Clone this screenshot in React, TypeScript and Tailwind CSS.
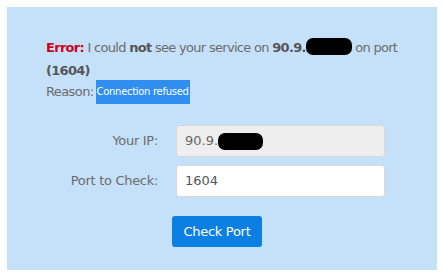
export default function App() {
  return (
    <div className="w-[443px] h-[277px] bg-white p-[7px] pr-[6px] font-['DejaVu_Sans',sans-serif] text-[#6b6b6b]">
      <div className="h-[263px] bg-[#c5e1fa] pl-[39px] pr-[10px] pt-[29px]">
        <p className="text-[13px] leading-[23px] tracking-[-0.7px] whitespace-nowrap">
          <span className="font-bold text-[#d0021b]">Error:</span> I could{' '}
          <span className="font-bold text-[#555]">not</span> see your service on{' '}
          <span className="font-bold text-[#555]">90.9.</span>
          <span className="inline-block w-[46px] h-[17px] bg-black rounded-[7px] align-[-3px]" /> on port
          <br />
          <span className="font-bold text-[#555]">(1604)</span>
        </p>
        <div className="-mt-[2px] flex items-center text-[13px] tracking-[-0.6px]">
          <span>Reason:</span>
          <span className="ml-[2px] bg-[#2f8ef0] text-white text-[10px] leading-[24px] px-[1px] tracking-[-0.3px]">
            Connection refused
          </span>
        </div>

        <div className="mt-[21px] flex flex-col gap-[8px]">
          <div className="flex items-center">
            <label className="w-[112px] text-right text-[13px] tracking-[-0.3px]">Your IP:</label>
            <div className="ml-[18px] w-[209px] h-[32px] bg-[#eeeeee] border border-[#d8d8d8] rounded-[3px] flex items-center pl-[8px] text-[13px] text-[#666]">
              90.9.
              <span className="inline-block w-[45px] h-[17px] bg-black rounded-[7px]" />
            </div>
          </div>
          <div className="flex items-center">
            <label className="w-[112px] text-right text-[13px] tracking-[-0.3px]">Port to Check:</label>
            <div className="ml-[18px] w-[209px] h-[32px] bg-white border border-[#d8d8d8] rounded-[3px] flex items-center pl-[8px] text-[13px] text-[#555]">
              1604
            </div>
          </div>
        </div>

        <div className="mt-[19px] pl-[126px]">
          <button className="w-[90px] h-[31px] bg-[#0c7fe3] text-white text-[13px] rounded-[3px] tracking-[-0.3px]">
            Check Port
          </button>
        </div>
      </div>
    </div>
  )
}
